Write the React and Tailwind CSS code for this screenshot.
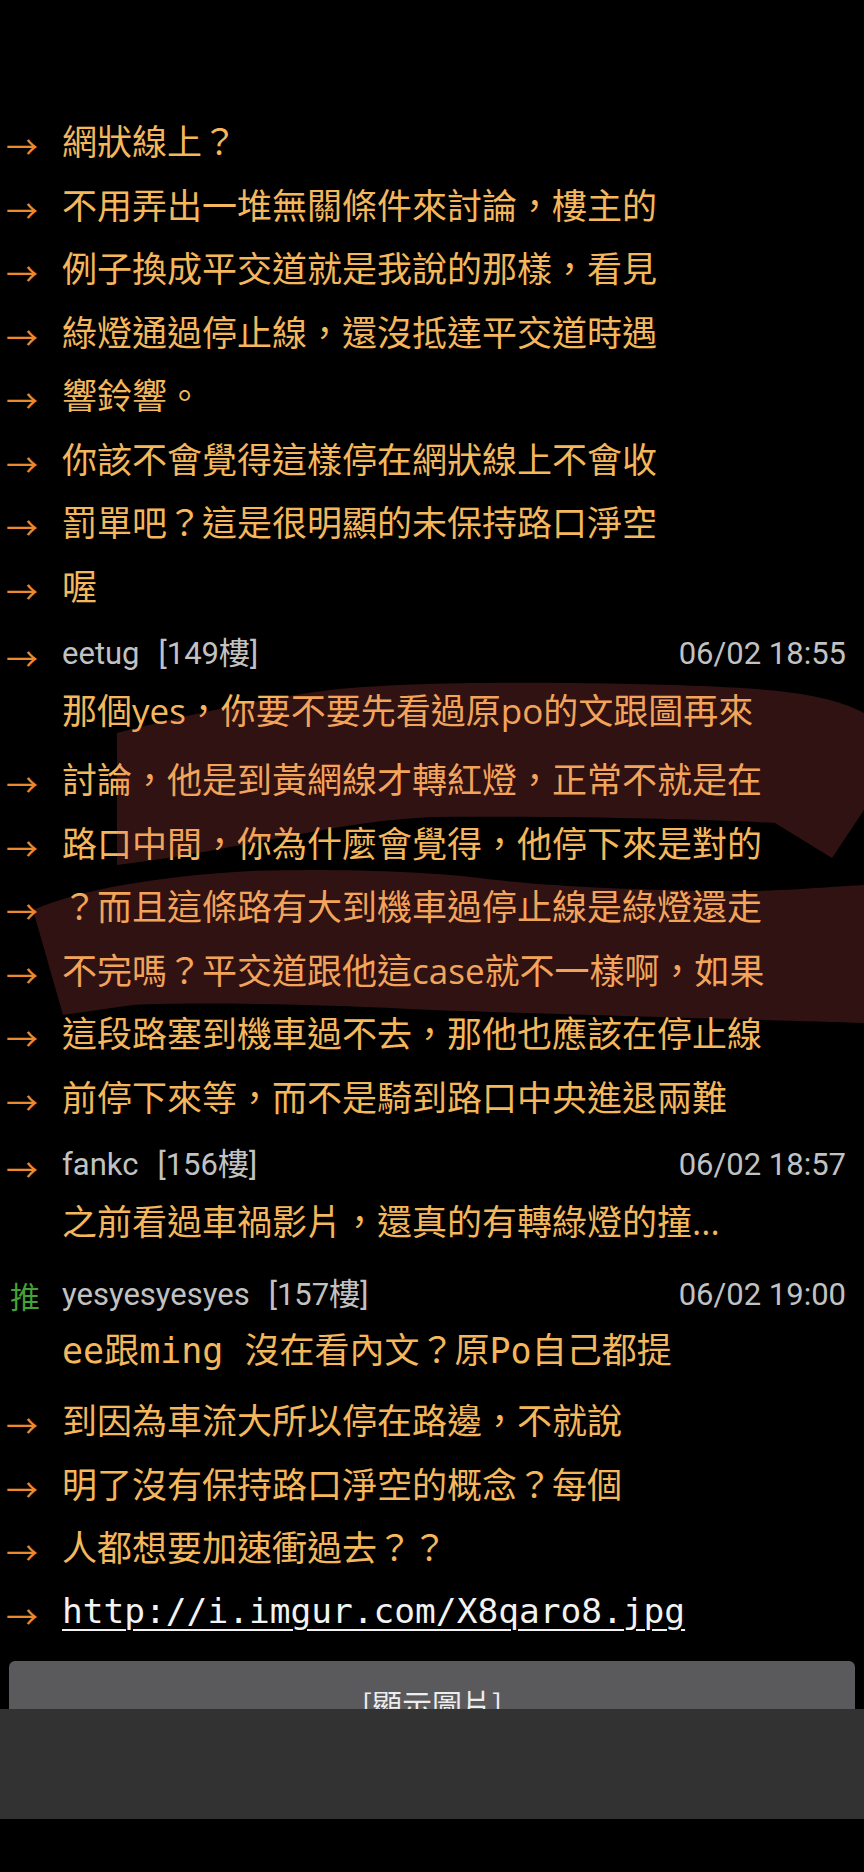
const FIRST = [
  '網狀線上？',
  '不用弄出一堆無關條件來討論，樓主的',
  '例子換成平交道就是我說的那樣，看見',
  '綠燈通過停止線，還沒抵達平交道時遇',
  '響鈴響。',
  '你該不會覺得這樣停在網狀線上不會收',
  '罰單吧？這是很明顯的未保持路口淨空',
  '喔',
]

const EETUG = [
  '討論，他是到黃網線才轉紅燈，正常不就是在',
  '路口中間，你為什麼會覺得，他停下來是對的',
  '？而且這條路有大到機車過停止線是綠燈還走',
  '不完嗎？平交道跟他這case就不一樣啊，如果',
  '這段路塞到機車過不去，那他也應該在停止線',
  '前停下來等，而不是騎到路口中央進退兩難',
]

const YES = [
  '到因為車流大所以停在路邊，不就說',
  '明了沒有保持路口淨空的概念？每個',
  '人都想要加速衝過去？？',
]

function Arrow() {
  return (
    <div className="w-[62px] shrink-0 flex items-center pt-[7px] pl-[6px]">
      <span className="text-[32px] leading-none text-[#ea8a2c] font-[family-name:'Noto_Sans_CJK_TC',sans-serif]">→</span>
    </div>
  )
}

function Row({ children, mono }) {
  return (
    <div className="flex h-[63.5px] items-center">
      <Arrow />
      <span
        className={
          mono
            ? "whitespace-nowrap text-[34.5px] leading-[63.5px] text-[#f2f2f2] underline decoration-2 underline-offset-[6px] font-[family-name:'DejaVu_Sans_Mono',monospace]"
            : "whitespace-nowrap text-[35px] leading-[63.5px] text-[#f4b75c] font-[family-name:'Open_Sans','Noto_Sans_CJK_TC',sans-serif]"
        }
      >
        {children}
      </span>
    </div>
  )
}

function Header({ tag, name, floor, time }) {
  return (
    <div className="flex h-[50px] items-center pr-[18px] text-[31px] leading-[50px] text-[#c2c2c2] font-[family-name:'Roboto','Noto_Sans_CJK_TC',sans-serif]">
      {tag === 'push' ? (
        <div className="w-[62px] shrink-0 pl-[10px] text-[30px] text-[#45a336] font-[family-name:'Noto_Sans_CJK_TC',sans-serif]">推</div>
      ) : (
        <Arrow />
      )}
      <span>{name}</span>
      <span className="ml-[19px]">[{floor}樓]</span>
      <span className="ml-auto">{time}</span>
    </div>
  )
}

function Comment({ tag, name, floor, time, first, mono, rows }) {
  return (
    <div className="pt-[10.5px]">
      <Header tag={tag} name={name} floor={floor} time={time} />
      <div
        className={
          mono
            ? "h-[63.5px] pl-[62px] mb-[6px] whitespace-nowrap text-[35px] leading-[63.5px] text-[#f4b75c] font-[family-name:'DejaVu_Sans_Mono','Noto_Sans_CJK_TC',monospace]"
            : "h-[63.5px] pl-[62px] mb-[6px] whitespace-nowrap text-[35px] leading-[63.5px] text-[#f4b75c] font-[family-name:'Open_Sans','Noto_Sans_CJK_TC',sans-serif]"
        }
      >
        {first}
      </div>
      {rows}
    </div>
  )
}

export default function App() {
  return (
    <div className="relative w-[864px] min-h-[1872px] overflow-hidden bg-black">
      <div className="pt-[110px]">
        {FIRST.map((t, i) => <Row key={i}>{t}</Row>)}

        <Comment
          name="eetug"
          floor="149"
          time="06/02 18:55"
          first="那個yes，你要不要先看過原po的文跟圖再來"
          rows={EETUG.map((t, i) => <Row key={i}>{t}</Row>)}
        />

        <Comment
          name="fankc"
          floor="156"
          time="06/02 18:57"
          first="之前看過車禍影片，還真的有轉綠燈的撞..."
        />

        <Comment
          tag="push"
          name="yesyesyesyes"
          floor="157"
          time="06/02 19:00"
          first="ee跟ming 沒在看內文？原Po自己都提"
          mono
          rows={
            <>
              {YES.map((t, i) => <Row key={i}>{t}</Row>)}
              <Row mono>http://i.imgur.com/X8qaro8.jpg</Row>
            </>
          }
        />

        {/* image button, cut off by the bottom bar */}
        <div className="mt-[18px] mx-[9px] h-[48px] overflow-hidden">
          <div className="flex h-[84px] items-center justify-center rounded-md bg-[#5a5a5c] text-[30px] text-[#ededed] font-[family-name:'Noto_Sans_CJK_TC',sans-serif]">
            [顯示圖片]
          </div>
        </div>
        <div className="h-[110px] bg-[#323232]" />
      </div>

      {/* hand-drawn highlight over the eetug comment */}
      <svg className="pointer-events-none absolute left-0 top-0" width="864" height="1872" viewBox="0 0 864 1872">
        <g fill="rgb(240,90,90)" fillOpacity="0.2">
          <path d="M117,733 C160,722 250,700 330,690 C420,680 600,682 700,686 C780,689 830,695 864,713 L864,810 L832,858 L775,823 C700,819 560,816 432,817 C330,822 240,850 117,865 Z" />
          <path d="M33,910 C80,890 150,877 250,871 C340,868 430,872 480,878 C540,886 640,891 750,891 C800,890 840,886 864,885 L864,1023 C780,1020 640,1017 432,1010 C320,1004 200,1002 133,1005 L63,1015 Z" />
        </g>
      </svg>
    </div>
  )
}
